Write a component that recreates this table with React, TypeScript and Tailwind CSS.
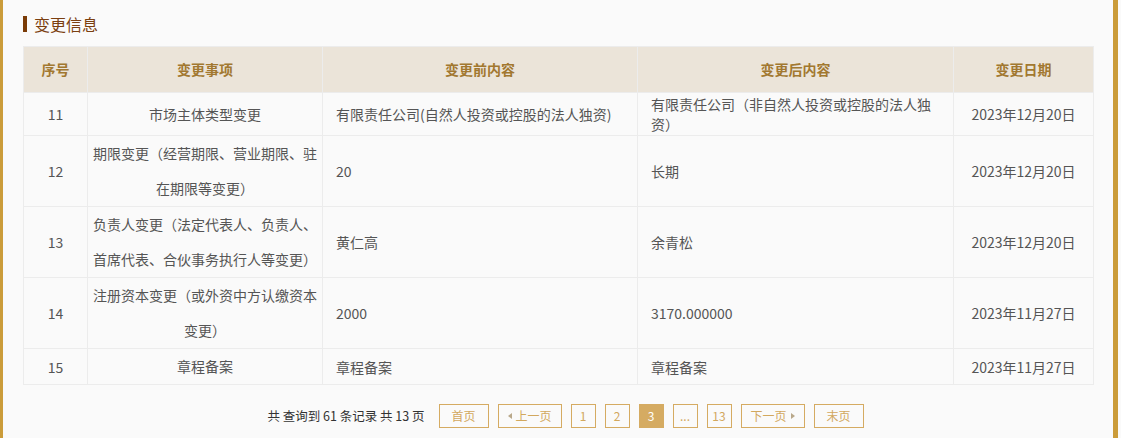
import React from 'react';

type Row = { no: string; item: string; before: string; after: string; date: string };

const rows: Row[] = [
  { no: '11', item: '市场主体类型变更', before: '有限责任公司(自然人投资或控股的法人独资)', after: '有限责任公司（非自然人投资或控股的法人独资）', date: '2023年12月20日' },
  { no: '12', item: '期限变更（经营期限、营业期限、驻在期限等变更）', before: '20', after: '长期', date: '2023年12月20日' },
  { no: '13', item: '负责人变更（法定代表人、负责人、首席代表、合伙事务执行人等变更）', before: '黄仁高', after: '余青松', date: '2023年12月20日' },
  { no: '14', item: '注册资本变更（或外资中方认缴资本变更）', before: '2000', after: '3170.000000', date: '2023年11月27日' },
  { no: '15', item: '章程备案', before: '章程备案', after: '章程备案', date: '2023年11月27日' },
];

const headers = ['序号', '变更事项', '变更前内容', '变更后内容', '变更日期'];

function PageButton({ children, active, wide }: { children: React.ReactNode; active?: boolean; wide?: string }) {
  return (
    <div
      className={
        'h-[24px] flex items-center justify-center gap-[4px] border border-[#d5ab62] text-[12px] ' +
        (active ? 'bg-[#d5ab62] text-white ' : 'text-[#d2a85e] ') +
        (wide ?? 'w-[25px]')
      }
    >
      {children}
    </div>
  );
}

export default function App() {
  const cell = 'border border-[#ececec] text-[14px] text-[#555]';
  return (
    <div
      className="w-[1121px] h-[438px] bg-[#fafafa] overflow-hidden"
      style={{ fontFamily: '"Microsoft YaHei", "Noto Sans CJK SC", sans-serif' }}
    >
      <div className="w-[1118px] h-full border-l-[3px] border-r-[5px] border-[#cb9c3a] px-[20px] pt-[13px]">
        <div className="flex items-center h-[22px] mb-[11px]">
          <div className="w-[4px] h-[16px] bg-[#7a3b07] mr-[7px]" />
          <span className="text-[16px] text-[#7b3f10] leading-[22px]">变更信息</span>
        </div>

        <table className="w-[1070px] table-fixed border-collapse border border-[#ececec]">
          <colgroup>
            <col className="w-[64px]" />
            <col className="w-[235px]" />
            <col className="w-[315px]" />
            <col className="w-[316px]" />
            <col className="w-[140px]" />
          </colgroup>
          <thead>
            <tr>
              {headers.map((h) => (
                <th
                  key={h}
                  className="h-[46px] border border-[#ececec] bg-[#ebe4d9] text-[14px] font-bold text-[#a27830] text-center"
                >
                  {h}
                </th>
              ))}
            </tr>
          </thead>
          <tbody>
            {rows.map((r) => (
              <tr key={r.no}>
                <td className={cell + ' text-center leading-[20px] py-[1px]'}>{r.no}</td>
                <td className={cell + ' text-center leading-[35px] px-[5px]'}>{r.item}</td>
                <td className={cell + ' text-left leading-[20px] py-[1px] px-[13px]'}>{r.before}</td>
                <td className={cell + ' text-left leading-[20px] py-[1px] px-[13px]'}>{r.after}</td>
                <td className={cell + ' text-center leading-[20px] py-[1px]'}>{r.date}</td>
              </tr>
            ))}
          </tbody>
        </table>

        <div className="mt-[19px] flex items-center justify-center pl-[15px] gap-[9px]">
          <span className="text-[12.5px] text-[#333] mr-[5px]">共 查询到 61 条记录 共 13 页</span>
          <PageButton wide="w-[50px]">首页</PageButton>
          <PageButton wide="w-[64px]">
            <span className="w-0 h-0 border-y-[3px] border-y-transparent border-r-[4px] border-r-[#b9a88a]" />
            上一页
          </PageButton>
          <PageButton>1</PageButton>
          <PageButton>2</PageButton>
          <PageButton active>3</PageButton>
          <PageButton>...</PageButton>
          <PageButton>13</PageButton>
          <PageButton wide="w-[64px]">
            下一页
            <span className="w-0 h-0 border-y-[3px] border-y-transparent border-l-[4px] border-l-[#b9a88a]" />
          </PageButton>
          <PageButton wide="w-[50px]">末页</PageButton>
        </div>
      </div>
    </div>
  );
}
